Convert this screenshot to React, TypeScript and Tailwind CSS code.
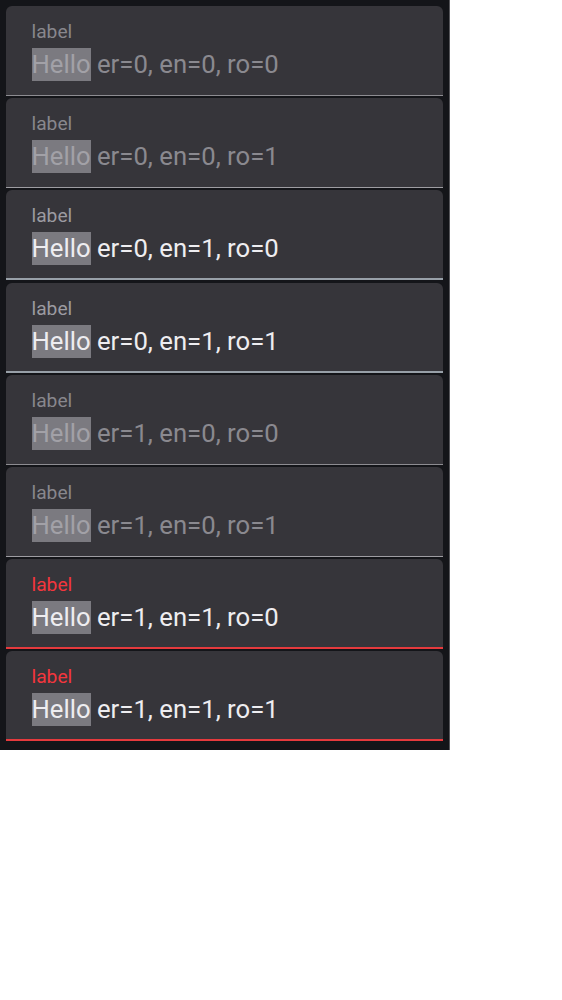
import React from "react";

interface FieldState {
  er: number;
  en: number;
  ro: number;
}

const states: FieldState[] = [
  { er: 0, en: 0, ro: 0 },
  { er: 0, en: 0, ro: 1 },
  { er: 0, en: 1, ro: 0 },
  { er: 0, en: 1, ro: 1 },
  { er: 1, en: 0, ro: 0 },
  { er: 1, en: 0, ro: 1 },
  { er: 1, en: 1, ro: 0 },
  { er: 1, en: 1, ro: 1 },
];

const FilledField = ({ er, en, ro }: FieldState) => {
  const enabled = en === 1;
  const error = er === 1 && enabled;

  const labelColor = error
    ? "text-[#f4363d]"
    : enabled
    ? "text-[#9c9ba1]"
    : "text-[#88878d]";
  const valueColor = enabled ? "text-[#eeedf0]" : "text-[#8a898f]";
  const selColor = enabled ? "text-[#eeedf0]" : "text-[#a2a1a7]";
  const line = error
    ? "border-b-2 border-[#e53a3d]"
    : enabled
    ? "border-b-2 border-[#98a0a8]"
    : ro === 1
    ? "border-b-[1.5px] border-[#9e9da2]"
    : "border-b-[1.5px] border-[#8d8c91]";

  return (
    <div
      className={`h-[90px] rounded-t-[6px] bg-[#36353a] pl-[25.5px] pt-[15px] ${line}`}
    >
      <div className={`text-[19.2px] leading-[22px] ${labelColor}`}>label</div>
      <div className={`mt-[5px] whitespace-nowrap text-[25.7px] leading-[33px] ${valueColor}`}>
        <span className={`inline-block bg-[#7b7a80] ${selColor}`}>Hello</span>{" "}
        er={er}, en={en}, ro={ro}
      </div>
    </div>
  );
};

export default function App() {
  return (
    <div className="min-h-[1000px] bg-white font-['Roboto',sans-serif]">
      <div className="flex h-[750px] w-[450px] flex-col gap-[2.2px] border-r border-[#56565a] bg-[#141519] pl-[6px] pr-[6px] pt-[6px]">
        {states.map((s, i) => (
          <FilledField key={i} {...s} />
        ))}
      </div>
    </div>
  );
}
